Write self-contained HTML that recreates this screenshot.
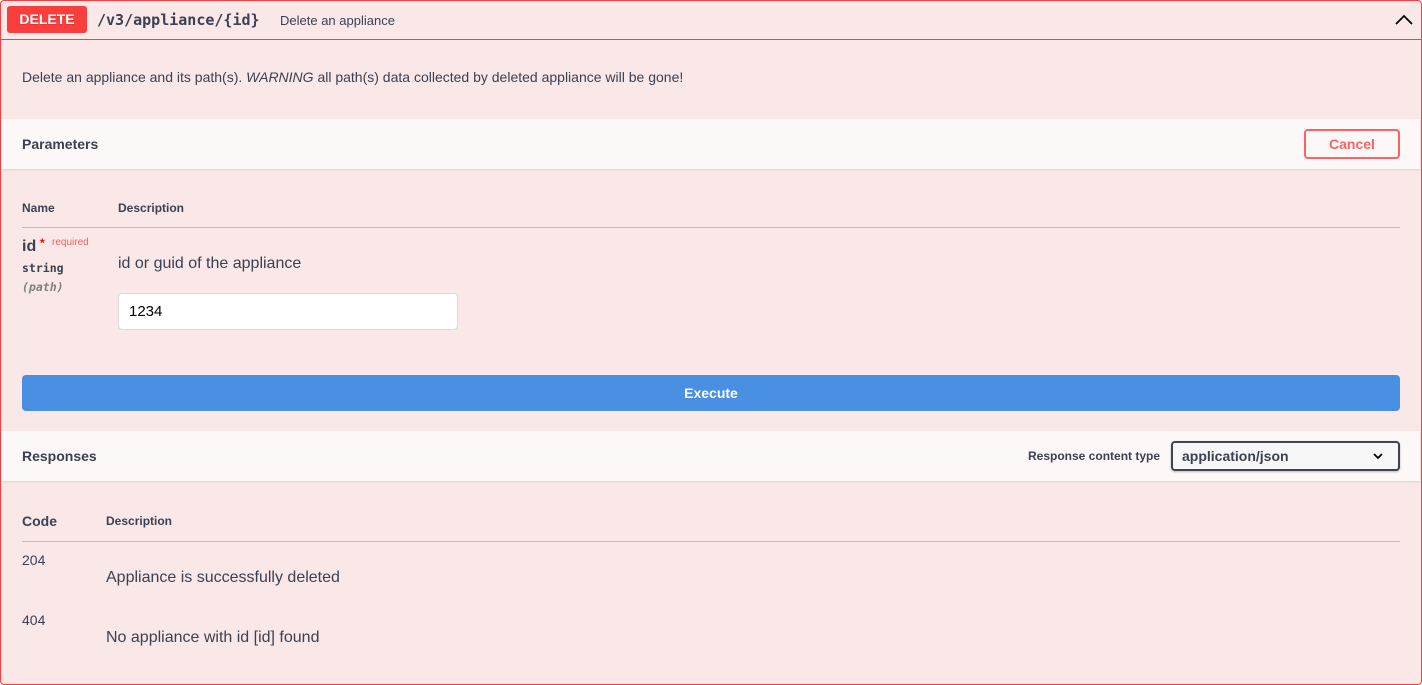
<!DOCTYPE html>
<html><head><style>
*{box-sizing:border-box;margin:0;padding:0}
body{width:1422px;height:685px;background:#fff;font-family:"Liberation Sans",sans-serif;color:#3b4151;position:relative;overflow:hidden}
.a{position:absolute}
#op{left:0;top:0;width:1422px;height:685px;border:1px solid #f93e3e;border-radius:4px;background:#fae7e7}
.sec{left:1px;width:1419px;background:#fdf8f8;box-shadow:0 1px 2px rgba(0,0,0,.1)}
.b{font-weight:bold}
</style></head><body>
<div id="op" class="a"></div>
<div class="a" style="left:1px;top:39px;width:1420px;height:1px;background:#f93e3e"></div>
<div class="a b" style="left:7px;top:6px;width:80px;height:27px;background:#f93e3e;border-radius:3px;color:#fff;font-size:14px;text-align:center;line-height:27px;text-shadow:0 1px 0 rgba(0,0,0,.1)">DELETE</div>
<div class="a b" style="left:97px;top:10px;font-family:'DejaVu Sans Mono',monospace;font-size:15px;line-height:20px">/v3/appliance/{id}</div>
<div class="a" style="left:280px;top:13px;font-size:13px;line-height:16px">Delete an appliance</div>
<svg class="a" style="left:1395px;top:12px" width="18" height="16" viewBox="0 0 18 16"><path d="M1 12 L9 4 L17 12" fill="none" stroke="#000" stroke-width="1.8"/></svg>
<div class="a" style="left:22px;top:69px;font-size:14px">Delete an appliance and its path(s). <i>WARNING</i> all path(s) data collected by deleted appliance will be gone!</div>

<div class="a sec" style="top:119px;height:50px"></div>
<div class="a b" style="left:22px;top:136px;font-size:14px">Parameters</div>
<div class="a b" style="left:1304px;top:129px;width:96px;height:30px;border:2px solid #ff6060;border-radius:4px;color:#ff6060;font-size:14px;text-align:center;line-height:26px;background:transparent">Cancel</div>

<div class="a b" style="left:22px;top:201px;font-size:12px">Name</div>
<div class="a b" style="left:118px;top:201px;font-size:12px">Description</div>
<div class="a" style="left:22px;top:227px;width:1378px;height:1px;background:#c4b9b9"></div>
<div class="a b" style="left:22px;top:238px;font-size:16px">id</div>
<div class="a" style="left:40px;top:236px;color:red;font-size:12px;font-weight:bold">*</div>
<div class="a" style="left:52px;top:237px;color:rgba(255,0,0,.6);font-size:10px">required</div>
<div class="a b" style="left:22px;top:261px;font-family:'DejaVu Sans Mono',monospace;font-size:11.5px">string</div>
<div class="a b" style="left:22px;top:280px;font-family:'DejaVu Sans Mono',monospace;font-size:11.5px;font-style:italic;color:#808080">(path)</div>
<div class="a" style="left:118px;top:255px;font-size:16px">id or guid of the appliance</div>
<div class="a" style="left:118px;top:293px;width:340px;height:37px;background:#fff;border:1px solid #d9d9d9;border-radius:4px;font-size:15px;padding:9px 10px;color:#000">1234</div>

<div class="a b" style="left:22px;top:375px;width:1378px;height:36px;background:#4990e2;border-radius:4px;color:#fff;font-size:14px;text-align:center;line-height:36px">Execute</div>

<div class="a sec" style="top:431px;height:50px"></div>
<div class="a b" style="left:22px;top:448px;font-size:14px">Responses</div>
<div class="a b" style="left:1028px;top:449px;font-size:12px">Response content type</div>
<div class="a b" style="left:1171px;top:441px;width:229px;height:30px;border:2px solid #41444e;border-radius:4px;background:#f7f7f7;font-size:14px;padding:5px 9px;box-shadow:0 1px 2px rgba(0,0,0,.25)">application/json</div>
<svg class="a" style="left:1372px;top:451px" width="12" height="10" viewBox="0 0 12 10"><path d="M2 3 L6 7 L10 3" fill="none" stroke="#000" stroke-width="1.8"/></svg>

<div class="a b" style="left:22px;top:513px;font-size:14px">Code</div>
<div class="a b" style="left:106px;top:514px;font-size:12px">Description</div>
<div class="a" style="left:22px;top:541px;width:1378px;height:1px;background:#c4b9b9"></div>
<div class="a" style="left:22px;top:552px;font-size:14px">204</div>
<div class="a" style="left:106px;top:569px;font-size:16px">Appliance is successfully deleted</div>
<div class="a" style="left:22px;top:612px;font-size:14px">404</div>
<div class="a" style="left:106px;top:629px;font-size:16px">No appliance with id [id] found</div>
</body></html>
